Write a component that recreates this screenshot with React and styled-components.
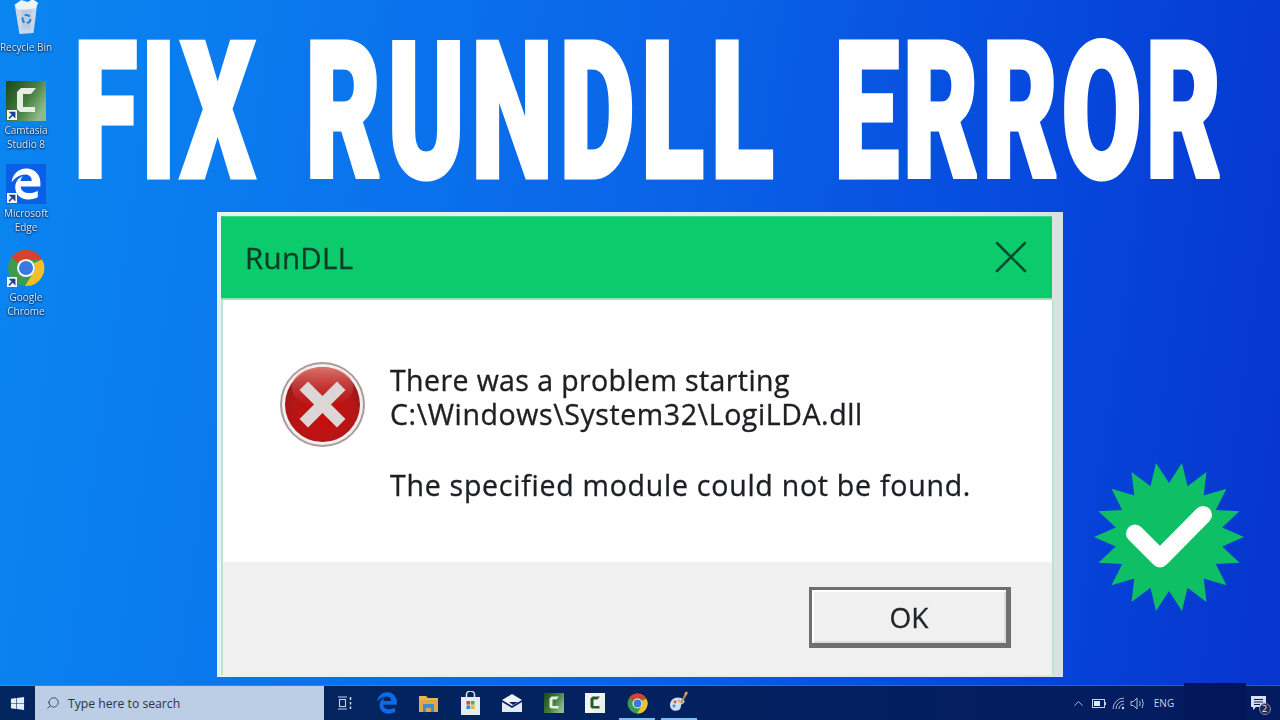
import styled, { createGlobalStyle } from 'styled-components';
import { FaEdgeLegacy, FaWindows } from 'react-icons/fa6';
import { ChevronUp, Search, X } from 'lucide-react';

const GlobalStyle = createGlobalStyle`
  html, body { margin: 0; padding: 0; overflow: hidden; }
  body { font-family: "Open Sans", "Noto Sans", sans-serif; }
`;

const Desktop = styled.div`
  width: 1280px;
  height: 720px;
  display: flex;
  flex-direction: column;
  overflow: hidden;
  background: linear-gradient(98deg, #0a86f0 0%, #0a78ee 22%, #0a64e8 50%, #0648dc 78%, #0734cc 100%);
`;

const Workspace = styled.div`
  flex: 1;
  display: flex;
  min-height: 0;
`;

const IconColumn = styled.div`
  flex: 0 0 52px;
  display: flex;
  flex-direction: column;
  align-items: center;
  filter: blur(0.6px);
`;

const Shortcut = styled.div`
  width: 52px;
  height: ${(p) => p.$h}px;
  display: flex;
  flex-direction: column;
  align-items: center;
`;

const ShortcutLabel = styled.div`
  margin-top: ${(p) => p.$mt || 3}px;
  font: 10px/13.5px "Open Sans", sans-serif;
  text-align: center;
  color: #dfeafa;
  text-shadow: 0 0 2px #02204a, 0 1px 2px #02204a;
  white-space: nowrap;
`;

const IconTile = styled.div`
  position: relative;
  width: 40px;
  height: ${(p) => p.$h || 40}px;
  background: ${(p) => p.$bg || 'transparent'};
  display: flex;
  align-items: center;
  justify-content: center;
  color: #fff;
`;

const ArrowBadge = styled.span`
  position: absolute;
  left: 1px;
  bottom: 1px;
  width: 10px;
  height: 10px;
  background: #f4f6fa;
  display: flex;
`;

const Stage = styled.div`
  flex: 1;
  min-width: 0;
  display: flex;
  flex-direction: column;
`;

const Headline = styled.h1`
  margin: 0;
  box-sizing: border-box;
  flex: none;
  align-self: flex-start;
  width: max-content;
  height: 212px;
  padding: 12px 0 0 36px;
  font-family: Roboto, sans-serif;
  font-weight: 900;
  font-size: 190px;
  line-height: 200px;
  letter-spacing: 8px;
  word-spacing: 22px;
  white-space: pre;
  color: #fff;
  -webkit-text-stroke: 5px #fff;
  transform: scaleX(0.608);
  transform-origin: 0 0;
`;

const HeadWord = styled.span`
  letter-spacing: ${(p) => p.$ls}px;
  margin-left: ${(p) => p.$ml || 0}px;
`;

const LowerRow = styled.div`
  display: flex;
  align-items: flex-start;
`;

const DialogFrame = styled.div`
  margin-left: 165px;
  width: 846px;
  height: 465px;
  flex: none;
  box-sizing: border-box;
  padding: 4px 11px 2px 4px;
  background: linear-gradient(90deg, #e9f1f1 0%, #e6ecec 90%, #dadfe3 100%);
  display: flex;
  flex-direction: column;
`;

const TitleBar = styled.div`
  flex: 0 0 82px;
  padding: 0 24px;
  display: flex;
  align-items: center;
  justify-content: space-between;
  background: #0ccb6c;
  box-shadow: inset 0 1px 0 #3ad58a;
  border-bottom: 2px solid #8ee6bb;
`;

const TitleText = styled.span`
  font: 400 29.5px "Open Sans", sans-serif;
  letter-spacing: 0.3px;
  color: #0d3b26;
  -webkit-text-stroke: 0.3px #0d3b26;
  filter: blur(0.6px);
`;

const CloseGlyph = styled(X)`
  margin-right: -11px;
  color: #0a4a2c;
  filter: blur(0.5px);
`;

const DialogBody = styled.div`
  flex: 1;
  padding: 61px 0 0 56px;
  display: flex;
  gap: 24px;
  background: #fff;
  border-left: 2px solid #b6e8cf;
  border-right: 2px solid #b6e8cf;
  margin-right: -2px;
`;

const ErrorSvg = styled.svg`
  flex: none;
  filter: blur(0.5px);
`;

const MessageBlock = styled.div`
  font-size: 28.5px;
  line-height: 34px;
  color: #1d1f24;
  -webkit-text-stroke: 0.35px #1d1f24;
  filter: blur(0.6px);
  margin-top: 2px;
`;

const MessageLine = styled.p`
  margin: 0 0 ${(p) => p.$gap || 0}px;
  white-space: nowrap;
  letter-spacing: ${(p) => p.$ls || 0}px;
`;

const DialogFooter = styled.div`
  flex: 0 0 113px;
  box-sizing: border-box;
  padding: 25px 41px 0 0;
  display: flex;
  justify-content: flex-end;
  align-items: flex-start;
  background: #f0f0f0;
  border-left: 2px solid #b6e8cf;
  border-right: 2px solid #b6e8cf;
  margin-right: -2px;
`;

const OkButton = styled.button`
  width: 202px;
  height: 61px;
  box-sizing: border-box;
  padding: 0;
  border: solid #6f6f6f;
  border-width: 3px 5px 5px 3px;
  background: #f0f0f0;
  box-shadow: inset 2px 2px 0 #fff, inset -2px -2px 0 #dcdcdc;
  font: 400 28px "Open Sans", sans-serif;
  color: #22242a;
  -webkit-text-stroke: 0.3px #22242a;
  filter: blur(0.5px);
`;

const VerifiedBadge = styled.svg`
  width: 152px;
  height: 152px;
  margin: 249px 0 0 30px;
  flex: none;
`;

const Taskbar = styled.div`
  flex: 0 0 34px;
  display: flex;
  align-items: stretch;
  background: linear-gradient(90deg, #03265f 0%, #03235f 40%, #041a60 100%);
  box-shadow: 0 -1px 0 rgba(120, 190, 255, 0.25);
  position: relative;
`;

const StartButton = styled.div`
  flex: 0 0 35px;
  display: flex;
  align-items: center;
  justify-content: center;
  color: #e4edf8;
`;

const SearchBox = styled.div`
  flex: 0 0 289px;
  box-sizing: border-box;
  padding-left: 11px;
  display: flex;
  align-items: center;
  gap: 8px;
  background: #bccde6;
  color: #2b3444;
  font: 12.2px "Open Sans", sans-serif;
`;

const SearchGlyph = styled(Search)`
  transform: scaleX(-1);
`;

const AppStrip = styled.div`
  display: flex;
  align-items: center;
  height: 100%;
`;

const AppSlot = styled.div`
  position: relative;
  width: 41.75px;
  height: 100%;
  display: flex;
  align-items: center;
  justify-content: center;
  color: ${(p) => p.$color || '#d5deec'};
  &::after {
    content: '';
    display: ${(p) => (p.$active ? 'block' : 'none')};
    position: absolute;
    left: 3px;
    right: 3px;
    bottom: 0;
    height: 2px;
    background: #7cc0ee;
  }
`;

const Tray = styled.div`
  margin-left: auto;
  padding-right: 11px;
  display: flex;
  align-items: center;
  color: #c6d2e6;
  height: 100%;
`;

const TraySlot = styled.div`
  width: ${(p) => p.$w}px;
  display: flex;
  align-items: center;
  justify-content: center;
`;

const LangText = styled.span`
  font: 10px "Open Sans", sans-serif;
`;

const ClockPatch = styled.div`
  position: absolute;
  left: 1184px;
  top: -3px;
  width: 62px;
  height: 37px;
  background: #04165a;
`;

const NotifyBadge = styled.span`
  position: absolute;
  right: -5px;
  bottom: -5px;
  width: 12px;
  height: 12px;
  border-radius: 50%;
  background: #1e2a4e;
  border: 1px solid #7f8aa6;
  box-sizing: border-box;
  font: 9px/10px "Open Sans", sans-serif;
  text-align: center;
  color: #e6ecf6;
`;

const NotifyIcon = styled.div`
  position: relative;
  display: flex;
  color: #d8e0ee;
`;

function starPoints() {
  const pts = [];
  for (let i = 0; i < 36; i++) {
    const r = i % 2 === 0 ? 75 : 54;
    const a = (i * 10 * Math.PI) / 180;
    pts.push(`${(76 + r * Math.cos(a)).toFixed(1)},${(76 + r * Math.sin(a)).toFixed(1)}`);
  }
  return pts.join(' ');
}

function ShortcutArrow() {
  return (
    <ArrowBadge>
      <svg width="10" height="10" viewBox="0 0 10 10">
        <path d="M2 8.5 L6 4 M3.6 2.6 H7.6 V6.6 Z" stroke="#1c3f8f" strokeWidth="1.6" fill="#1c3f8f" />
      </svg>
    </ArrowBadge>
  );
}

function RecycleBin() {
  return (
    <svg width="32" height="34" viewBox="0 0 34 36">
      <path d="M5 5 L29 3 L25 35 L10 36 Z" fill="#c9d8ea" />
      <path d="M5 5 L12 0 L19 2 L24 -1 L30 3 L27 9 L8 10 Z" fill="#eef3f8" />
      <path d="M12 11 L23 10 L22 31 L13 31 Z" fill="#b7c8dc" opacity="0.7" />
      <circle cx="17.5" cy="20" r="4.2" fill="none" stroke="#2a7fd0" strokeWidth="2.2" strokeDasharray="6 2.6" />
    </svg>
  );
}

function CamtasiaMark({ size = 40, light }) {
  return (
    <svg width={size} height={size} viewBox="0 0 40 40">
      <defs>
        <linearGradient id={light ? 'camL' : 'camD'} x1="0" y1="0" x2="1" y2="0.6">
          <stop offset="0" stopColor={light ? '#f2f4f2' : '#17481a'} />
          <stop offset="0.6" stopColor={light ? '#f2f4f2' : '#457f3e'} />
          <stop offset="1" stopColor={light ? '#e8ecea' : '#8fb88c'} />
        </linearGradient>
      </defs>
      <rect width="40" height="40" fill={`url(#${light ? 'camL' : 'camD'})`} />
      <path d="M30 7 L15 7 L11 11 L11 28 L14 31 L29 31 L29 26 L17 26 L17 13 L25 13 Z" fill={light ? '#245c2c' : '#e6eee2'} />
    </svg>
  );
}

function ChromeMark({ size = 40 }) {
  return (
    <svg width={size} height={size} viewBox="0 0 40 40">
      <circle cx="20" cy="20" r="19" fill="#3d9a4f" />
      <path d="M20 1 A19 19 0 0 1 37 11 L20 11 A9 9 0 0 0 12 15 L4.5 9 A19 19 0 0 1 20 1 Z" fill="#d8402f" />
      <path d="M37 11 A19 19 0 0 1 19 39 L27 26 A9 9 0 0 0 28 15 Z" fill="#f0bf2c" />
      <circle cx="20" cy="20" r="9.5" fill="#f4f6f8" />
      <circle cx="20" cy="20" r="7.4" fill="#3a79e0" />
    </svg>
  );
}

function FolderMark() {
  return (
    <svg width="21" height="21" viewBox="0 0 21 21">
      <path d="M1 3 H8 L10 5 H20 V19 H1 Z" fill="#e9b64e" />
      <rect x="1" y="7" width="19" height="12" fill="#dfa945" />
      <rect x="5" y="11" width="11" height="8" fill="#3f8fd0" />
      <rect x="8" y="15" width="5" height="4" fill="#d9a94b" />
    </svg>
  );
}

function StoreMark() {
  return (
    <svg width="21" height="24" viewBox="0 0 21 24">
      <path d="M6.5 6 V3.5 A4 3.4 0 0 1 14.5 3.5 V6" fill="none" stroke="#dfe6f0" strokeWidth="1.5" />
      <rect x="1" y="6" width="19" height="18" fill="#e6ebf2" />
      <rect x="6.5" y="10" width="3.6" height="3.6" fill="#d9482f" />
      <rect x="10.9" y="10" width="3.6" height="3.6" fill="#5caf35" />
      <rect x="6.5" y="14.4" width="3.6" height="3.6" fill="#2f88d8" />
      <rect x="10.9" y="14.4" width="3.6" height="3.6" fill="#e9b52e" />
    </svg>
  );
}

function MailMark() {
  return (
    <svg width="22" height="20" viewBox="0 0 22 20">
      <path d="M1 7 L11 1 L21 7 L11 13 Z" fill="#f0f3f8" />
      <path d="M1 9 L11 15 L21 9 V19 H1 Z" fill="#e4e9f2" />
      <path d="M8 9 H17 L12 12 Z" fill="#04205c" />
    </svg>
  );
}

function PaletteMark() {
  return (
    <svg width="22" height="24" viewBox="0 0 22 24">
      <path d="M2 14 C2 8 8 5 13 7 C18 9 17 12 14 13 C12 14 14 17 11 19 C7 21 2 19 2 14 Z" fill="#cfdcea" />
      <circle cx="7" cy="11" r="1.4" fill="#d9534a" />
      <circle cx="11" cy="10" r="1.4" fill="#e9b52e" />
      <circle cx="6" cy="15" r="1.4" fill="#3f8fd0" />
      <path d="M13 12 L18 3" stroke="#b08a5a" strokeWidth="2" />
      <path d="M17 4 L19 1" stroke="#e2a04a" strokeWidth="2.4" />
    </svg>
  );
}

function TaskViewMark() {
  return (
    <svg width="16" height="14" viewBox="0 0 16 14" fill="none" stroke="#c7d2e4" strokeWidth="1.1">
      <path d="M1 1 H10 M1 13 H10" />
      <rect x="2.5" y="3.5" width="6" height="7" />
      <path d="M13.5 1 V4 M13.5 6 V8.5 M13.5 10.5 V13" strokeWidth="1.6" />
    </svg>
  );
}

function BatteryMark() {
  return (
    <svg width="14" height="9" viewBox="0 0 14 9">
      <rect x="0.5" y="0.5" width="12" height="8" fill="none" stroke="#c6d2e6" />
      <rect x="2" y="2" width="6" height="5" fill="#e4eaf4" />
      <rect x="13" y="3" width="1" height="3" fill="#c6d2e6" />
    </svg>
  );
}

function WifiMark() {
  return (
    <svg width="14" height="13" viewBox="0 0 14 13" fill="none" stroke="#aab8d2" strokeWidth="1">
      <path d="M1 12 A11 11 0 0 1 12 1 M4 12 A8 8 0 0 1 12 4 M7 12 A5 5 0 0 1 12 7" />
      <circle cx="11" cy="11" r="1.2" fill="#d5deec" stroke="none" />
    </svg>
  );
}

function VolumeMark() {
  return (
    <svg width="15" height="13" viewBox="0 0 15 13" fill="none" stroke="#b4c1d8" strokeWidth="1">
      <path d="M1 4.5 H3.5 L7 1 V12 L3.5 8.5 H1 Z" />
      <path d="M9.5 4 Q11 6.5 9.5 9 M12 2 Q14.5 6.5 12 11" />
    </svg>
  );
}

function ErrorIcon() {
  return (
    <ErrorSvg width="87" height="87" viewBox="0 0 87 87">
      <defs>
        <radialGradient id="errRed" cx="0.5" cy="0.62" r="0.6">
          <stop offset="0" stopColor="#cc0c0c" />
          <stop offset="0.7" stopColor="#b41616" />
          <stop offset="1" stopColor="#8e1a1a" />
        </radialGradient>
        <linearGradient id="errGloss" x1="0" y1="0" x2="0" y2="1">
          <stop offset="0" stopColor="#f08a80" stopOpacity="0.8" />
          <stop offset="1" stopColor="#d04040" stopOpacity="0" />
        </linearGradient>
      </defs>
      <circle cx="43.5" cy="43.5" r="42.5" fill="#a89c9c" />
      <circle cx="43.5" cy="43.5" r="40.5" fill="#f6efee" />
      <circle cx="43.5" cy="43.5" r="37.5" fill="url(#errRed)" />
      <ellipse cx="43.5" cy="26" rx="31" ry="20" fill="url(#errGloss)" />
      <path d="M29 29 L58 58 M58 29 L29 58" stroke="#dcd6d6" strokeWidth="12" strokeLinecap="square" />
    </ErrorSvg>
  );
}

export default function App() {
  return (
    <Desktop>
      <GlobalStyle />
      <Workspace>
        <IconColumn>
          <Shortcut $h={81}>
            <IconTile $h={34}>
              <RecycleBin />
            </IconTile>
            <ShortcutLabel $mt={7}>Recycle Bin</ShortcutLabel>
          </Shortcut>
          <Shortcut $h={83}>
            <IconTile>
              <CamtasiaMark />
              <ShortcutArrow />
            </IconTile>
            <ShortcutLabel>Camtasia<br />Studio 8</ShortcutLabel>
          </Shortcut>
          <Shortcut $h={84}>
            <IconTile $bg="#0b5fe6">
              <FaEdgeLegacy size={32} />
              <ShortcutArrow />
            </IconTile>
            <ShortcutLabel>Microsoft<br />Edge</ShortcutLabel>
          </Shortcut>
          <Shortcut $h={84}>
            <IconTile>
              <ChromeMark size={38} />
              <ShortcutArrow />
            </IconTile>
            <ShortcutLabel>Google<br />Chrome</ShortcutLabel>
          </Shortcut>
        </IconColumn>

        <Stage>
          <Headline>
            <HeadWord $ls={6.4}>FIX</HeadWord>{' '}
            <HeadWord $ls={11.5}>RUNDLL</HeadWord>{' '}
            <HeadWord $ls={6.7} $ml={11}>ERROR</HeadWord>
          </Headline>
          <LowerRow>
            <DialogFrame>
              <TitleBar>
                <TitleText>RunDLL</TitleText>
                <CloseGlyph size={56} strokeWidth={1.1} />
              </TitleBar>
              <DialogBody>
                <ErrorIcon />
                <MessageBlock>
                  <MessageLine $ls={0.4}>There was a problem starting</MessageLine>
                  <MessageLine $gap={37} $ls={0.6}>C:\Windows\System32\LogiLDA.dll</MessageLine>
                  <MessageLine $ls={0.75}>The specified module could not be found.</MessageLine>
                </MessageBlock>
              </DialogBody>
              <DialogFooter>
                <OkButton>OK</OkButton>
              </DialogFooter>
            </DialogFrame>
            <VerifiedBadge viewBox="0 0 152 152">
              <polygon points={starPoints()} fill="#0fbf66" />
              <path d="M42 72.5 L67 97.5 L110 54" fill="none" stroke="#fff" strokeWidth="18" strokeLinecap="round" strokeLinejoin="round" />
            </VerifiedBadge>
          </LowerRow>
        </Stage>
      </Workspace>

      <Taskbar>
        <StartButton>
          <FaWindows size={15} />
        </StartButton>
        <SearchBox>
          <SearchGlyph size={14} strokeWidth={1.4} />
          Type here to search
        </SearchBox>
        <AppStrip>
          <AppSlot><TaskViewMark /></AppSlot>
          <AppSlot $color="#0f6ae8"><FaEdgeLegacy size={22} /></AppSlot>
          <AppSlot><FolderMark /></AppSlot>
          <AppSlot><StoreMark /></AppSlot>
          <AppSlot><MailMark /></AppSlot>
          <AppSlot><CamtasiaMark size={20} /></AppSlot>
          <AppSlot><CamtasiaMark size={20} light /></AppSlot>
          <AppSlot $active><ChromeMark size={21} /></AppSlot>
          <AppSlot $active><PaletteMark /></AppSlot>
        </AppStrip>
        <ClockPatch />
        <Tray>
          <TraySlot $w={20}><ChevronUp size={15} strokeWidth={1.4} /></TraySlot>
          <TraySlot $w={21}><BatteryMark /></TraySlot>
          <TraySlot $w={19}><WifiMark /></TraySlot>
          <TraySlot $w={19}><VolumeMark /></TraySlot>
          <TraySlot $w={34}><LangText>ENG</LangText></TraySlot>
          <TraySlot $w={66} />
          <TraySlot $w={22}>
            <NotifyIcon>
              <svg width="15" height="14" viewBox="0 0 15 14">
                <path d="M0 0 H15 V11 H5 L2 14 V11 H0 Z" fill="#d8e0ee" />
                <path d="M3 3.5 H12 M3 6 H12 M3 8.5 H9" stroke="#04195e" strokeWidth="1" />
              </svg>
              <NotifyBadge>2</NotifyBadge>
            </NotifyIcon>
          </TraySlot>
        </Tray>
      </Taskbar>
    </Desktop>
  );
}
